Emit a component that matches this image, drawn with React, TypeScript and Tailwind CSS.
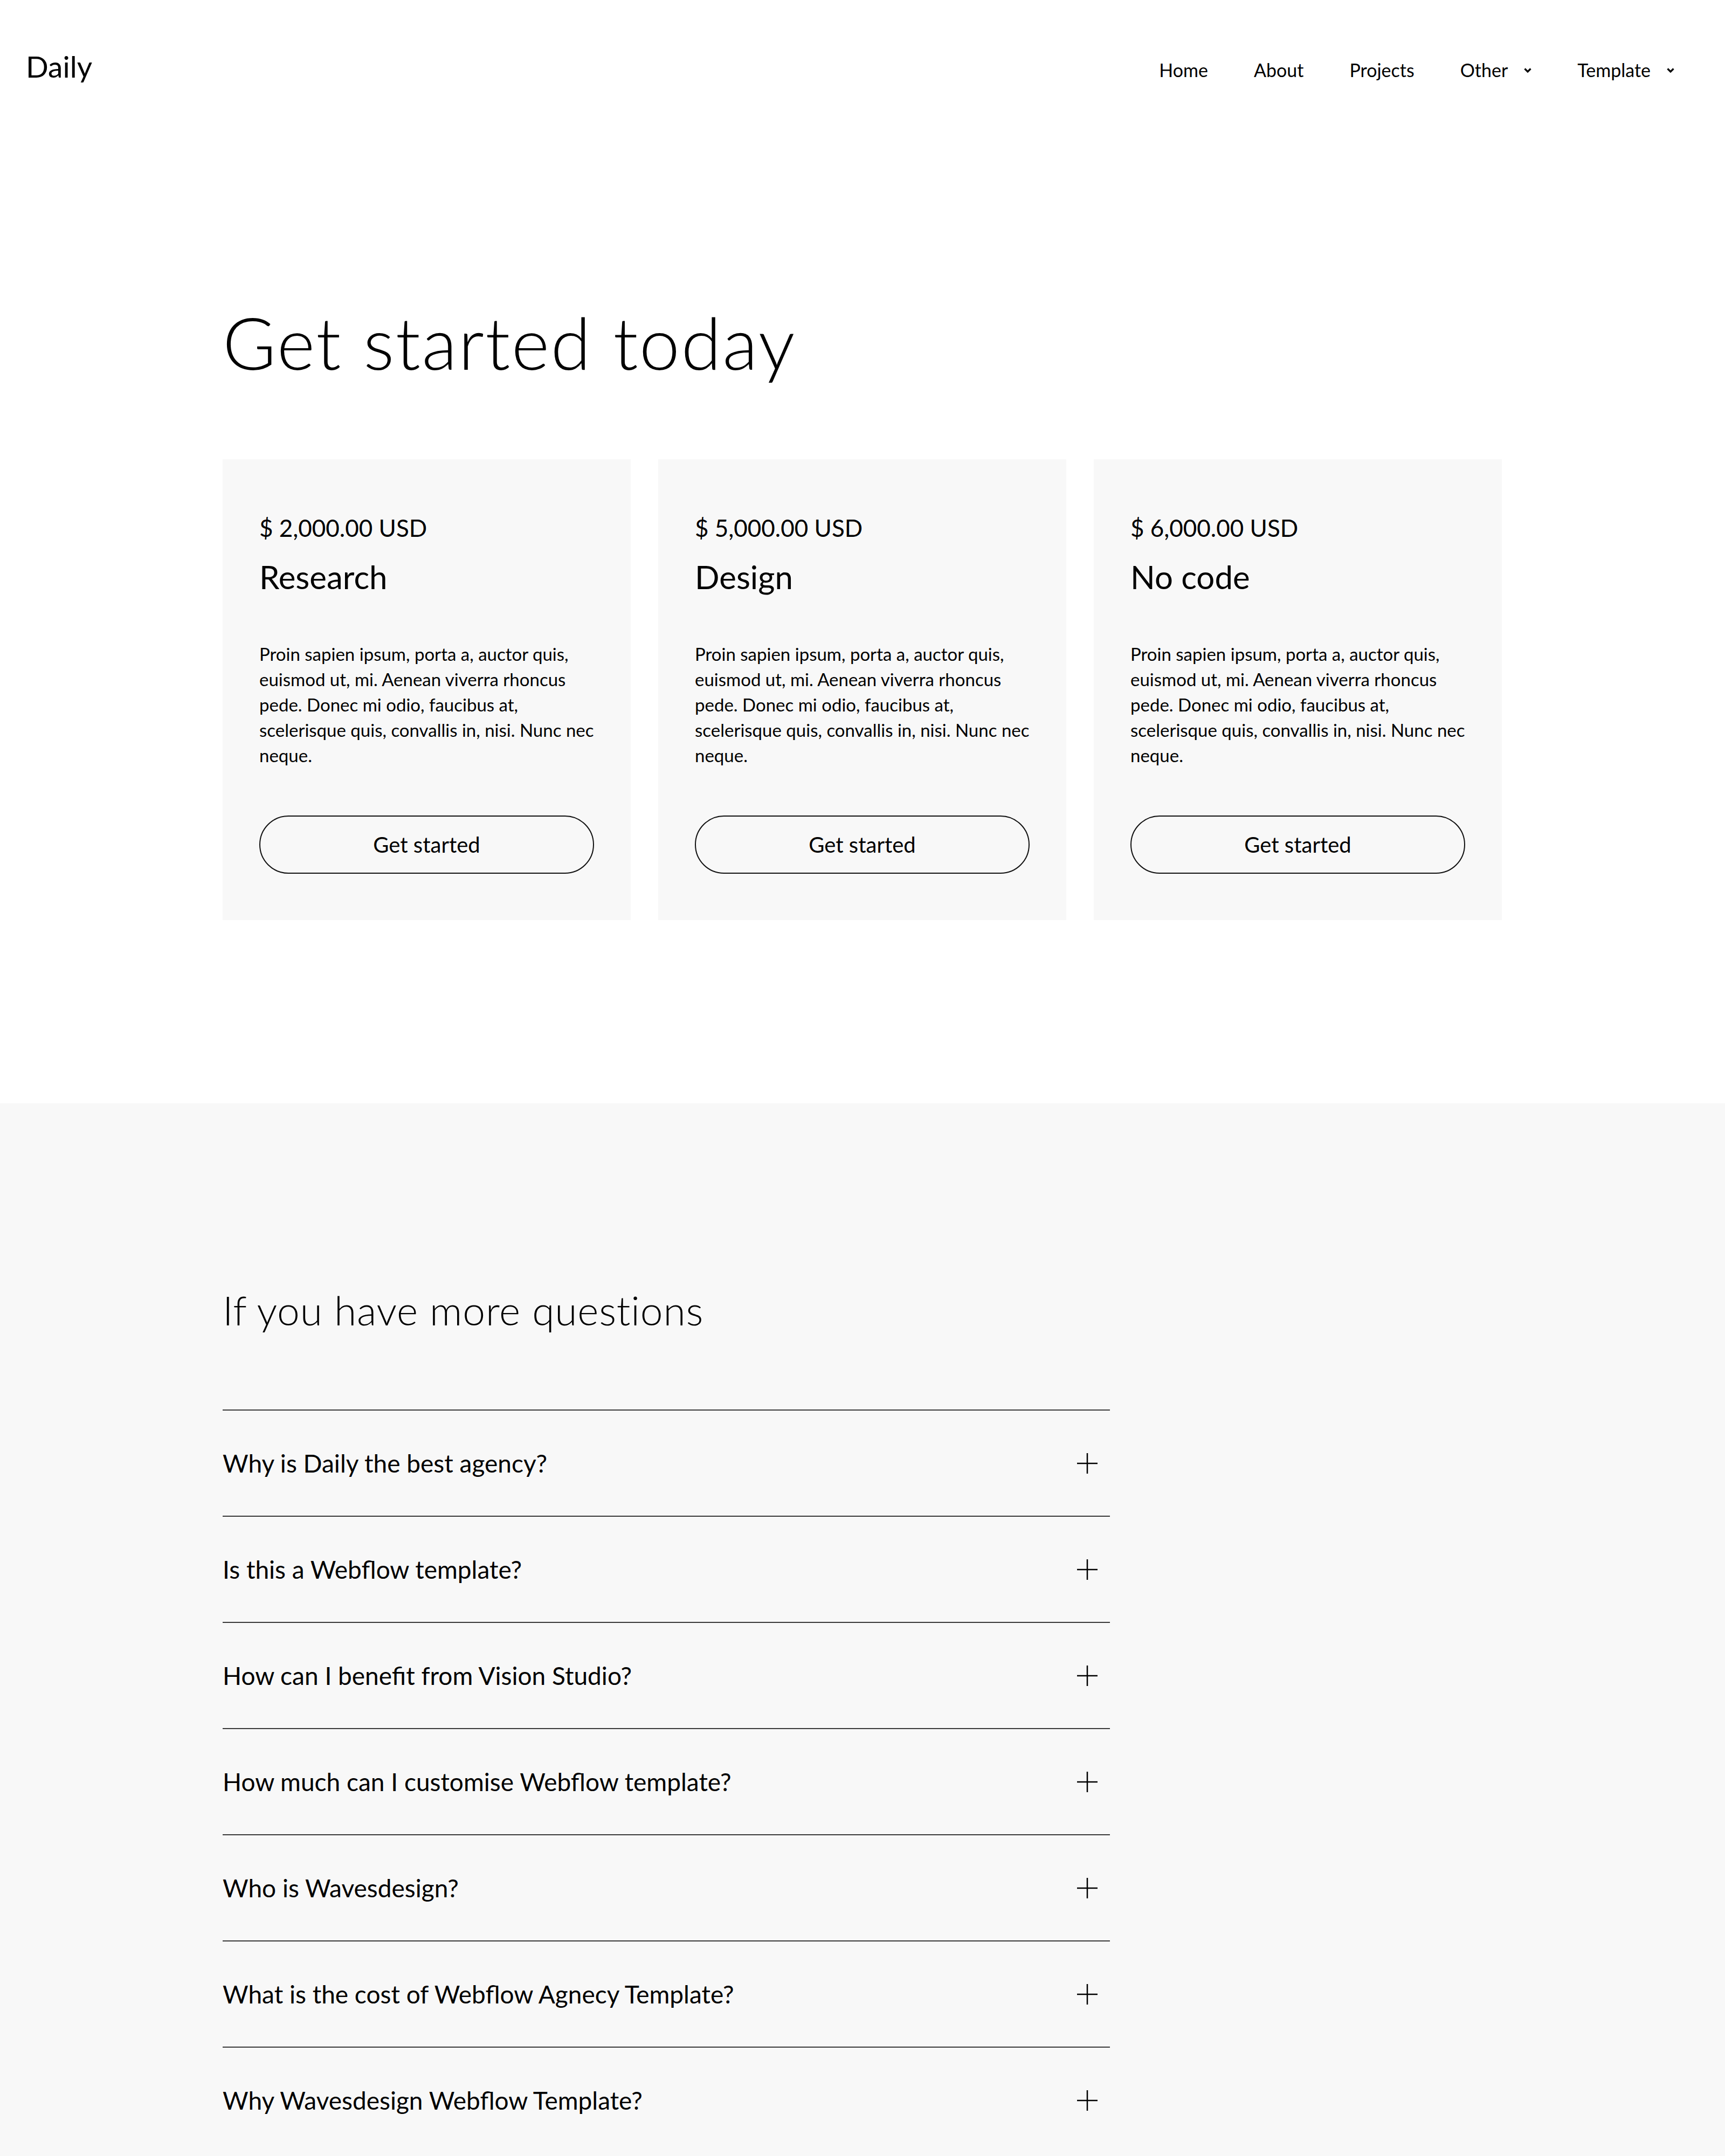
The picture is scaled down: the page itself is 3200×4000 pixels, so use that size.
const plans = [
  { price: "$ 2,000.00 USD", title: "Research" },
  { price: "$ 5,000.00 USD", title: "Design" },
  { price: "$ 6,000.00 USD", title: "No code" },
];

const bodyLines = [
  "Proin sapien ipsum, porta a, auctor quis,",
  "euismod ut, mi. Aenean viverra rhoncus",
  "pede. Donec mi odio, faucibus at,",
  "scelerisque quis, convallis in, nisi. Nunc nec",
  "neque.",
];

const questions = [
  "Why is Daily the best agency?",
  "Is this a Webflow template?",
  "How can I benefit from Vision Studio?",
  "How much can I customise Webflow template?",
  "Who is Wavesdesign?",
  "What is the cost of Webflow Agnecy Template?",
  "Why Wavesdesign Webflow Template?",
];

const Chevron = () => (
  <svg width="14" height="9" viewBox="0 0 14 9" fill="none" className="ml-[30px]">
    <path d="M1.5 1.5l5.5 5.5 5.5-5.5" stroke="#000" strokeWidth="3.2" />
  </svg>
);

const Plus = () => (
  <svg width="38" height="38" viewBox="0 0 38 38" fill="none">
    <path d="M0 19h38M19 0v38" stroke="#000" strokeWidth="2.5" />
  </svg>
);

const Header = () => (
  <header className="flex h-[246px] items-center justify-between pl-[48px] pr-[94px]">
    <a className="text-[55px] leading-none text-black">Daily</a>
    <nav className="flex items-center gap-[85px] pt-[14px] text-[34px] leading-none text-black">
      <a>Home</a>
      <a>About</a>
      <a>Projects</a>
      <div className="flex items-center">
        <span>Other</span>
        <Chevron />
      </div>
      <div className="flex items-center">
        <span>Template</span>
        <Chevron />
      </div>
    </nav>
  </header>
);

const PlanCard = ({ price, title }: { price: string; title: string }) => (
  <div className="flex w-[757px] flex-col bg-[#f8f8f8] px-[68px] pt-[98px] pb-[86px]">
    <p className="text-[44px] leading-[58px]">{price}</p>
    <h3 className="mt-[26px] text-[60px] leading-[72px]">{title}</h3>
    <p className="mt-[84px] text-[33px] leading-[47px]">
      {bodyLines.map((line) => (
        <span key={line} className="block whitespace-nowrap">
          {line}
        </span>
      ))}
    </p>
    <button className="mt-[88px] flex h-[108px] w-full items-center justify-center rounded-full border-[2.5px] border-[#111] text-[40px] text-black">
      Get started
    </button>
  </div>
);

export default function App() {
  return (
    <div className="min-h-screen bg-white font-['Lato',sans-serif] text-black">
      <Header />

      <section className="pt-[307px] pb-[340px]">
        <div className="mx-auto w-[2374px]">
          <h1 className="text-[135px] leading-[162px] font-light tracking-[2.4px]">Get started today</h1>
          <div className="mt-[137px] flex gap-[51px]">
            {plans.map((plan) => (
              <PlanCard key={plan.title} {...plan} />
            ))}
          </div>
        </div>
      </section>

      <section className="bg-[#f8f8f8] pt-[338px] pb-[200px]">
        <div className="mx-auto w-[2374px]">
          <h2 className="text-[75px] leading-[90px] font-light tracking-[0.8px]">If you have more questions</h2>
          <div className="mt-[140px] w-[1646px]">
            {questions.map((q) => (
              <div
                key={q}
                className="flex h-[197px] items-center justify-between border-t-2 border-[#3a3a3a] pr-[23px]"
              >
                <span className="text-[46px]">{q}</span>
                <Plus />
              </div>
            ))}
          </div>
        </div>
      </section>
    </div>
  );
}
